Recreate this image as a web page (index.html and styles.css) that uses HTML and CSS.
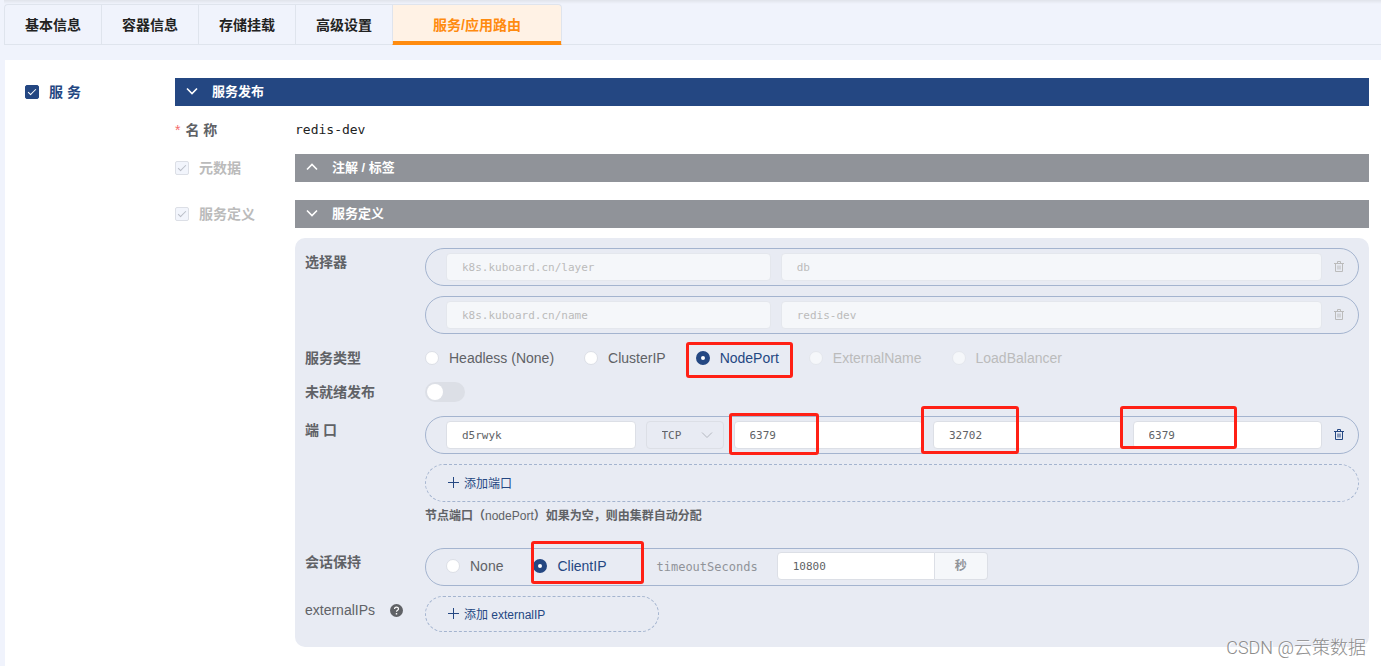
FILE: index.html
```
<!DOCTYPE html>
<html lang="zh-CN">
<head>
<meta charset="utf-8">
<meta name="viewport" content="width=device-width, initial-scale=1">
<title>服务/应用路由</title>
<link rel="stylesheet" href="styles.css">
</head>
<body>
<svg class="sprite" aria-hidden="true">
  <symbol id="down" viewBox="0 0 12 12"><path d="M1 3.5 6 8.5 11 3.5" fill="none" stroke="currentColor" stroke-width="1.6"/></symbol>
  <symbol id="up" viewBox="0 0 12 12"><path d="M1 8.5 6 3.5 11 8.5" fill="none" stroke="currentColor" stroke-width="1.6"/></symbol>
  <symbol id="caret" viewBox="0 0 12 12"><path d="M1 3.5 6 8.5 11 3.5" fill="none" stroke="currentColor"/></symbol>
  <symbol id="plus" viewBox="0 0 11 11"><path d="M5.5 0v11M0 5.5h11" stroke="currentColor"/></symbol>
  <symbol id="trash" viewBox="0 0 12 12"><path d="M1 2.5h10M4.5 2.5v-2h3v2M2.5 2.5v8h7v-8M5 4.5v4M7 4.5v4" fill="none" stroke="currentColor"/></symbol>
</svg>
<nav class="tabs" role="tablist">
  <button class="tab" role="tab">基本信息</button>
  <button class="tab" role="tab">容器信息</button>
  <button class="tab" role="tab">存储挂载</button>
  <button class="tab" role="tab">高级设置</button>
  <button class="tab active" role="tab" aria-selected="true">服务/应用路由</button>
</nav>
<main class="page">
  <label class="check primary"><input type="checkbox" checked>服 务</label>
  <div class="service">
    <button class="bar bar-blue"><svg class="icon"><use href="#down"/></svg>服务发布</button>
    <div class="field name-field">
      <span class="label"><span class="required">*</span>名 称</span>
      <span class="name">redis-dev</span>
    </div>
    <div class="field meta-field">
      <label class="check muted"><input type="checkbox" checked disabled>元数据</label>
      <button class="bar"><svg class="icon"><use href="#up"/></svg>注解 / 标签</button>
    </div>
    <div class="field">
      <label class="check muted"><input type="checkbox" checked disabled>服务定义</label>
      <div>
        <button class="bar"><svg class="icon"><use href="#down"/></svg>服务定义</button>
        <form class="panel">
          <div class="field">
            <span class="label">选择器</span>
            <div class="stack">
              <div class="pill">
                <div class="pair">
                  <input class="input" value="k8s.kuboard.cn/layer" aria-label="标签键" disabled>
                  <input class="input" value="db" aria-label="标签值" disabled>
                </div>
                <button class="delete" type="button" aria-label="删除" disabled><svg class="icon"><use href="#trash"/></svg></button>
              </div>
              <div class="pill">
                <div class="pair">
                  <input class="input" value="k8s.kuboard.cn/name" aria-label="标签键" disabled>
                  <input class="input" value="redis-dev" aria-label="标签值" disabled>
                </div>
                <button class="delete" type="button" aria-label="删除" disabled><svg class="icon"><use href="#trash"/></svg></button>
              </div>
            </div>
          </div>
          <div class="field type-field">
            <span class="label">服务类型</span>
            <div class="radios">
              <label class="radio"><input type="radio" name="type">Headless (None)</label>
              <label class="radio"><input type="radio" name="type">ClusterIP</label>
              <label class="radio"><input type="radio" name="type" checked>NodePort<span class="mark mark-type"></span></label>
              <label class="radio"><input type="radio" name="type" disabled>ExternalName</label>
              <label class="radio"><input type="radio" name="type" disabled>LoadBalancer</label>
            </div>
          </div>
          <div class="field">
            <label class="label" for="not-ready">未就绪发布</label>
            <div class="radios"><input class="switch" id="not-ready" type="checkbox" role="switch"></div>
          </div>
          <div class="field port-field">
            <span class="label">端 口</span>
            <div>
              <div class="stack">
                <div class="pill">
                  <div class="ports">
                    <input class="input" value="d5rwyk" aria-label="端口名称">
                    <div class="select">
                      <select class="input" aria-label="协议"><option>TCP</option></select>
                      <svg class="icon caret"><use href="#caret"/></svg>
                    </div>
                    <div class="port"><input class="input" value="6379" aria-label="服务端口"><span class="mark mark-port"></span></div>
                    <div class="port"><input class="input" value="32702" aria-label="节点端口"><span class="mark mark-node"></span></div>
                    <div class="port"><input class="input" value="6379" aria-label="容器端口"><span class="mark mark-target"></span></div>
                  </div>
                  <button class="delete" type="button" aria-label="删除"><svg class="icon"><use href="#trash"/></svg></button>
                </div>
                <button class="pill add" type="button"><svg class="plus"><use href="#plus"/></svg>添加端口</button>
              </div>
              <p class="note">节点端口（<span class="latin">nodePort</span>）如果为空，则由集群自动分配</p>
            </div>
          </div>
          <div class="field">
            <span class="label">会话保持</span>
            <div class="pill session">
              <label class="radio"><input type="radio" name="affinity">None</label>
              <label class="radio"><input type="radio" name="affinity" checked>ClientIP<span class="mark mark-client"></span></label>
              <label class="timeout" for="timeout">timeoutSeconds</label>
              <div class="group"><input class="input" id="timeout" value="10800"><span class="unit">秒</span></div>
            </div>
          </div>
          <div class="field">
            <span class="label latin">externalIPs
              <svg class="help" viewBox="0 0 12 12"><circle cx="6" cy="6" r="6" fill="#606266"/><path d="M4.2 4.7c0-2.4 3.6-2.3 3.6-.2 0 1.3-1.8 1.3-1.8 2.7" fill="none" stroke="#fff" stroke-width="1.1"/><circle cx="6" cy="9" r=".8" fill="#fff"/></svg>
            </span>
            <button class="pill add add-short" type="button"><svg class="plus"><use href="#plus"/></svg>添加 externalIP</button>
          </div>
        </form>
      </div>
    </div>
  </div>
</main>
<div class="watermark">CSDN @云策数据</div>
</body>
</html>
```
FILE: styles.css
```
* {
  box-sizing: border-box;
}

body {
  display: flex;
  flex-direction: column;
  min-height: 100vh;
  margin: 0;
  padding-left: 4px;
  background: #f0f3fc;
  color: #606266;
  font: 14px/28px "Liberation Sans", "Noto Sans CJK SC", sans-serif;
}

button,
input,
select {
  margin: 0;
  font-family: inherit;
}

button {
  cursor: pointer;
}

.sprite {
  position: absolute;
  width: 0;
  height: 0;
}

.icon {
  flex: none;
  width: 12px;
  height: 12px;
}

.tabs {
  display: flex;
  padding-top: 4px;
  border-bottom: 1px solid #dfe4ed;
  background: linear-gradient(#e0e3ea, #f0f3fc 4px);
}

.tab {
  height: 41px;
  margin-bottom: -1px;
  padding: 0 20px 2px;
  border: 1px solid #dfe4ed;
  border-right: 0;
  background: #f0f3fc;
  color: #222;
  font-size: 14px;
  font-weight: bold;
}

.tab:first-child {
  border-top-left-radius: 4px;
}

.tab.active {
  padding: 0 40px 2px;
  border-right: 1px solid #dfe4ed;
  border-top-right-radius: 4px;
  background: #fff2e5;
  box-shadow: inset 0 -3px #ff8b0f;
  border-bottom-color: #ff8b0f;
  color: #ff8b0f;
}

.page {
  display: grid;
  flex: 1;
  grid-template-columns: 150px minmax(0, 1fr);
  align-items: start;
  margin-top: 15px;
  margin-left: 1px;
  padding: 18px 12px 18px 20px;
  background: #fff;
}

.check {
  display: flex;
  align-items: center;
  gap: 10px;
  font-weight: bold;
}

.check input {
  appearance: none;
  position: relative;
  width: 14px;
  height: 14px;
  border: 1px solid #dcdfe6;
  border-radius: 2px;
  background: #f2f5fc;
}

.check input::after {
  content: "";
  position: absolute;
  left: 4px;
  top: 1px;
  width: 3px;
  height: 7px;
  border: solid #b9bdc6;
  border-width: 0 1px 1px 0;
  transform: rotate(45deg);
}

.primary {
  color: #244782;
}

.primary input {
  border-color: #244782;
  background: #244782;
}

.primary input::after {
  border-color: #fff;
}

.muted {
  color: #bbb;
}

.bar {
  display: flex;
  align-items: center;
  gap: 14px;
  width: 100%;
  height: 28px;
  padding: 0 11px 3px;
  border: 0;
  background: #909399;
  color: #fff;
  font-size: 13px;
  font-weight: bold;
}

.bar-blue {
  background: #244782;
}

.field {
  display: grid;
  grid-template-columns: 120px minmax(0, 1fr);
  align-items: start;
}

.label {
  font-weight: bold;
}

.required {
  margin-right: 5px;
  color: #f56c6c;
  font-weight: normal;
}

.name-field {
  margin: 10px 0;
}

.name {
  color: #222;
  font: 13px/28px "DejaVu Sans Mono", monospace;
}

.meta-field {
  margin-bottom: 18px;
}

.panel {
  margin-top: 10px;
  padding: 10px 10px 15px;
  border-radius: 10px;
  background: #e8ebf3;
}

.stack {
  display: flex;
  flex-direction: column;
  gap: 10px;
}

.pill {
  display: flex;
  align-items: center;
  height: 38px;
  padding-left: 20px;
  border: 1px solid #a4b4cf;
  border-radius: 20px;
}

.pair {
  display: grid;
  flex: 1;
  grid-template-columns: 3fr 5fr;
  gap: 10px;
}

.ports {
  display: grid;
  flex: 1;
  grid-template-columns: 1fr 78px 1fr 1fr 1fr;
  gap: 10px;
}

.input {
  display: block;
  width: 100%;
  min-width: 0;
  height: 28px;
  padding: 0 15px;
  border: 1px solid #dcdfe6;
  border-radius: 4px;
  background: #fff;
  color: #606266;
  font: 11px "DejaVu Sans Mono", monospace;
}

.input:disabled {
  border-color: #e4e7ed;
  background: #f5f7fa;
  color: #bbb;
}

.delete {
  display: flex;
  justify-content: center;
  width: 36px;
  padding: 0 2px 0 0;
  border: 0;
  background: none;
  color: #244782;
}

.delete:disabled {
  color: #bbb;
}

.type-field {
  margin: 10px 0 6px;
}

.radios {
  display: flex;
  align-items: center;
  gap: 30px;
  min-height: 28px;
}

.radio {
  display: flex;
  position: relative;
  align-items: center;
  gap: 10px;
}

.radio input {
  appearance: none;
  width: 14px;
  height: 14px;
  border: 1px solid #dcdfe6;
  border-radius: 50%;
  background: #fff;
}

.radio input:checked {
  border: 5px solid #244782;
}

.radio:has(:checked) {
  color: #244782;
}

.radio input:disabled {
  border-color: #e4e7ed;
  background: #f5f7fa;
}

.radio:has(:disabled) {
  color: #bbb;
}

.switch {
  appearance: none;
  width: 40px;
  height: 20px;
  padding: 2px;
  border-radius: 10px;
  background: #dcdfe6;
}

.switch::before {
  content: "";
  display: block;
  width: 16px;
  height: 16px;
  border-radius: 50%;
  background: #fff;
}

.port-field {
  margin: 10px 0 18px;
}

.select,
.port {
  position: relative;
}

.select .input {
  appearance: none;
  background: transparent;
}

.caret {
  position: absolute;
  top: 8px;
  right: 11px;
  color: #b4b8c0;
  pointer-events: none;
}

.add {
  gap: 5px;
  width: 100%;
  padding: 0 0 2px 22px;
  border-style: dashed;
  background: none;
  color: #244782;
  font-size: 12px;
}

.add-short {
  width: 234px;
  height: 36px;
}

.plus {
  width: 11px;
  height: 11px;
}

.note {
  margin: 0;
  font-size: 12px;
  font-weight: bold;
}

.latin {
  font-weight: normal;
}

.session {
  gap: 30px;
  margin-bottom: 10px;
  padding-bottom: 2px;
}

.timeout {
  margin-left: 20px;
  padding-top: 2px;
  color: #909399;
  font: 12px "DejaVu Sans Mono", monospace;
}

.group {
  display: flex;
  width: 211px;
  margin-left: -11px;
}

.group .input {
  flex: 1;
  border-radius: 4px 0 0 4px;
}

.unit {
  width: 53px;
  border: 1px solid #dcdfe6;
  border-left: 0;
  border-radius: 0 4px 4px 0;
  background: #f5f7fa;
  color: #909399;
  font-size: 12px;
  font-weight: bold;
  line-height: 26px;
  text-align: center;
}

.help {
  width: 13px;
  height: 13px;
  margin-left: 11px;
  vertical-align: -2px;
}

/* Red highlight frames drawn over the fields they point at */
.mark {
  position: absolute;
  border: 3px solid #ff2015;
  border-radius: 3px;
  pointer-events: none;
}

.mark-type {
  inset: -2px -14px -6px -10px;
}

.mark-port {
  top: -8px;
  left: -5px;
  width: 90px;
  height: 42px;
}

.mark-node {
  top: -15px;
  left: -12px;
  width: 98px;
  height: 48px;
}

.mark-target {
  top: -15px;
  left: -13px;
  width: 117px;
  height: 43px;
}

.mark-client {
  inset: -11px -37px auto -2px;
  height: 43px;
}

.watermark {
  position: absolute;
  right: 15px;
  bottom: 4px;
  color: #8c8c8c;
  font-family: Roboto, "Noto Sans CJK SC", sans-serif;
  font-size: 18px;
  font-weight: 300;
  text-shadow: 1px 1px #fff;
}
```
